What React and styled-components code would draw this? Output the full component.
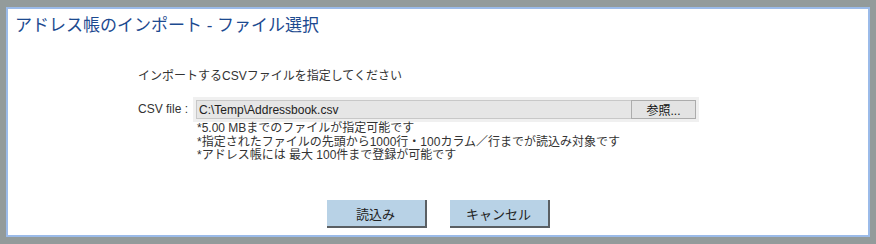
import React from 'react'
import styled, { createGlobalStyle } from 'styled-components'

const GlobalStyle = createGlobalStyle`
  html, body {
    margin: 0;
    padding: 0;
    background: #939b9b;
    font-family: "Liberation Sans", "Noto Sans CJK JP", sans-serif;
  }
`

const Backdrop = styled.div`
  width: 876px;
  height: 244px;
  padding: 7px 0 0 6px;
  box-sizing: border-box;
  background: #939b9b;
`

const Dialog = styled.div`
  width: 864px;
  height: 230px;
  box-sizing: border-box;
  border: 2px solid #9bbbe9;
  background: #ffffff;
  display: flex;
  flex-direction: column;
`

const Title = styled.h1`
  margin: 0;
  padding: 6px 0 0 7px;
  font-size: 17px;
  line-height: 22px;
  font-weight: normal;
  color: #1c4a90;
`

const Body = styled.div`
  padding: 31px 0 0 130px;
  color: #333;
  font-size: 12px;
`

const Lead = styled.p`
  margin: 0;
  line-height: 16px;
`

const FileRow = styled.div`
  display: flex;
  align-items: center;
  gap: 5px;
  margin-top: 13px;
`

const Label = styled.span`
  line-height: 25px;
`

const FileBox = styled.div`
  display: flex;
  align-items: center;
  width: 506px;
  height: 25px;
  box-sizing: border-box;
  padding: 0 3px 0 3px;
  background: #f0f0f0;
`

const PathField = styled.input`
  flex: 1;
  height: 19px;
  box-sizing: border-box;
  margin: 0;
  padding: 0 0 0 2px;
  border: 1px solid #c8c8c8;
  border-right: none;
  background: #e6e6e6;
  font-family: inherit;
  font-size: 12px;
  color: #222;
  outline: none;
`

const BrowseButton = styled.button`
  width: 65px;
  height: 19px;
  box-sizing: border-box;
  margin: 0;
  padding: 0;
  border: 1px solid #acacac;
  background: #e3e3e3;
  font-family: inherit;
  font-size: 12px;
  color: #111;
`

const Notes = styled.ul`
  list-style: none;
  margin: 0;
  padding: 0 0 0 59px;
  line-height: 13.5px;
`

const Actions = styled.div`
  margin-top: auto;
  padding-bottom: 7px;
  display: flex;
  justify-content: center;
  gap: 23px;
`

const ActionButton = styled.button`
  width: 100px;
  height: 28px;
  box-sizing: border-box;
  margin: 0;
  padding: 0;
  border: none;
  border-right: 2px solid #5a5f63;
  border-bottom: 2px solid #5a5f63;
  background: #b8d2e6;
  font-family: inherit;
  font-size: 13px;
  color: #222;
`

export default function App() {
  return (
    <>
      <GlobalStyle />
      <Backdrop>
        <Dialog>
          <Title>アドレス帳のインポート - ファイル選択</Title>
          <Body>
            <Lead>インポートするCSVファイルを指定してください</Lead>
            <FileRow>
              <Label>CSV file :</Label>
              <FileBox>
                <PathField readOnly value="C:\Temp\Addressbook.csv" />
                <BrowseButton>参照...</BrowseButton>
              </FileBox>
            </FileRow>
            <Notes>
              <li>*5.00 MBまでのファイルが指定可能です</li>
              <li>*指定されたファイルの先頭から1000行・100カラム／行までが読込み対象です</li>
              <li>*アドレス帳には 最大 100件まで登録が可能です</li>
            </Notes>
          </Body>
          <Actions>
            <ActionButton>読込み</ActionButton>
            <ActionButton>キャンセル</ActionButton>
          </Actions>
        </Dialog>
      </Backdrop>
    </>
  )
}
